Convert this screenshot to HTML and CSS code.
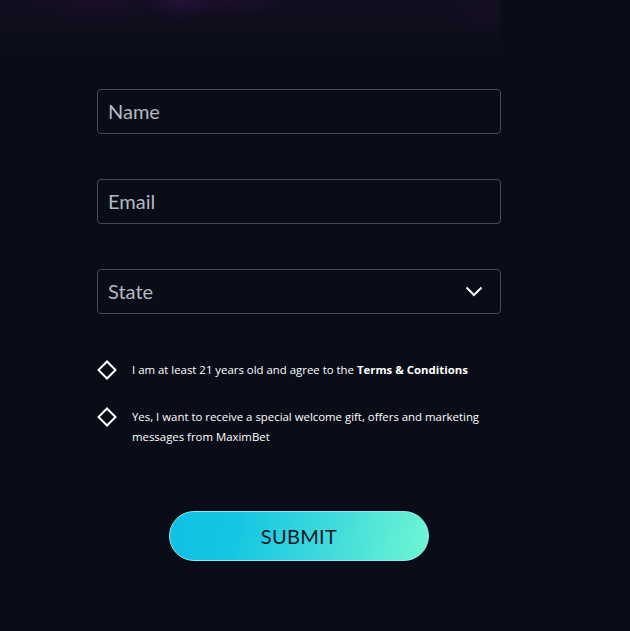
FILE: index.html
```html
<!DOCTYPE html>
<html lang="en">
<head>
<meta charset="utf-8">
<title>Sign up</title>
<link rel="stylesheet" href="styles.css">
</head>
<body>
<div class="glow"></div>
<form class="form">
  <div class="field"><span class="placeholder">Name</span></div>
  <div class="field"><span class="placeholder">Email</span></div>
  <div class="field select">
    <span class="placeholder">State</span>
    <svg class="chevron" width="18" height="11" viewBox="0 0 18 11"><path d="M1.5 1.5 L9 9 L16.5 1.5" fill="none" stroke="#fff" stroke-width="2"/></svg>
  </div>
  <div class="checks">
    <label class="check">
      <span class="box"></span>
      <span class="text">I am at least 21 years old and agree to the <b>Terms &amp; Conditions</b></span>
    </label>
    <label class="check">
      <span class="box"></span>
      <span class="text">Yes, I want to receive a special welcome gift, offers and marketing messages from MaximBet</span>
    </label>
  </div>
  <div class="actions">
    <button type="button" class="submit">SUBMIT</button>
  </div>
</form>
</body>
</html>
```
FILE: styles.css
```css
html, body {
  margin: 0;
  padding: 0;
}
body {
  background: #0a0d18;
  width: 630px;
  height: 631px;
  overflow: hidden;
  position: relative;
  font-family: Lato, "Noto Sans", sans-serif;
}
.glow {
  position: absolute;
  left: 0;
  top: 0;
  width: 500px;
  height: 55px;
  background:
    radial-gradient(ellipse 35px 18px at 180px 2px, rgba(70, 20, 100, 0.35), transparent),
    radial-gradient(ellipse 80px 22px at 100px 0px, rgba(50, 15, 60, 0.3), transparent),
    radial-gradient(ellipse 60px 18px at 230px 0px, rgba(60, 18, 80, 0.28), transparent),
    radial-gradient(ellipse 40px 25px at 485px 15px, rgba(35, 15, 50, 0.3), transparent),
    linear-gradient(to bottom, rgba(22, 14, 36, 0.6), rgba(10, 13, 24, 0));
}
.form {
  position: relative;
  margin: 0;
  padding: 89px 0 0 97px;
  width: 404px;
}
.field {
  box-sizing: border-box;
  height: 45px;
  border: 1px solid #474b57;
  border-radius: 4px;
  padding: 0 10px;
  display: flex;
  align-items: center;
  justify-content: space-between;
}
.field + .field {
  margin-top: 45px;
}
.placeholder {
  font-size: 20px;
  color: #b4b8c0;
  padding-bottom: 2px;
}
.chevron {
  margin-right: 7px;
}
.checks {
  margin-top: 46px;
  display: flex;
  flex-direction: column;
  gap: 27px;
}
.check {
  display: flex;
  align-items: flex-start;
  gap: 15px;
  color: #ffffff;
  font-family: "Open Sans", "Noto Sans", sans-serif;
  font-size: 11.4px;
  line-height: 20px;
}
.box {
  flex: none;
  width: 14px;
  height: 14px;
  margin: 3px 3px 0 3px;
  border: 2px solid #ffffff;
  transform: rotate(45deg);
  box-sizing: border-box;
}
.text {
  width: 360px;
}
.text b {
  font-weight: 700;
}
.actions {
  display: flex;
  justify-content: center;
  margin-top: 64px;
}
.submit {
  width: 260px;
  height: 50px;
  border-radius: 25px;
  border: 1px solid #8fe9f2;
  background: linear-gradient(100deg, #10c1e3 0%, #14c6e2 25%, #3ed9dc 60%, #6ef6d2 100%);
  color: #0b1626;
  font-family: Lato, "Noto Sans", sans-serif;
  font-size: 20px;
  letter-spacing: 0.3px;
  padding: 0;
  cursor: pointer;
}
```
